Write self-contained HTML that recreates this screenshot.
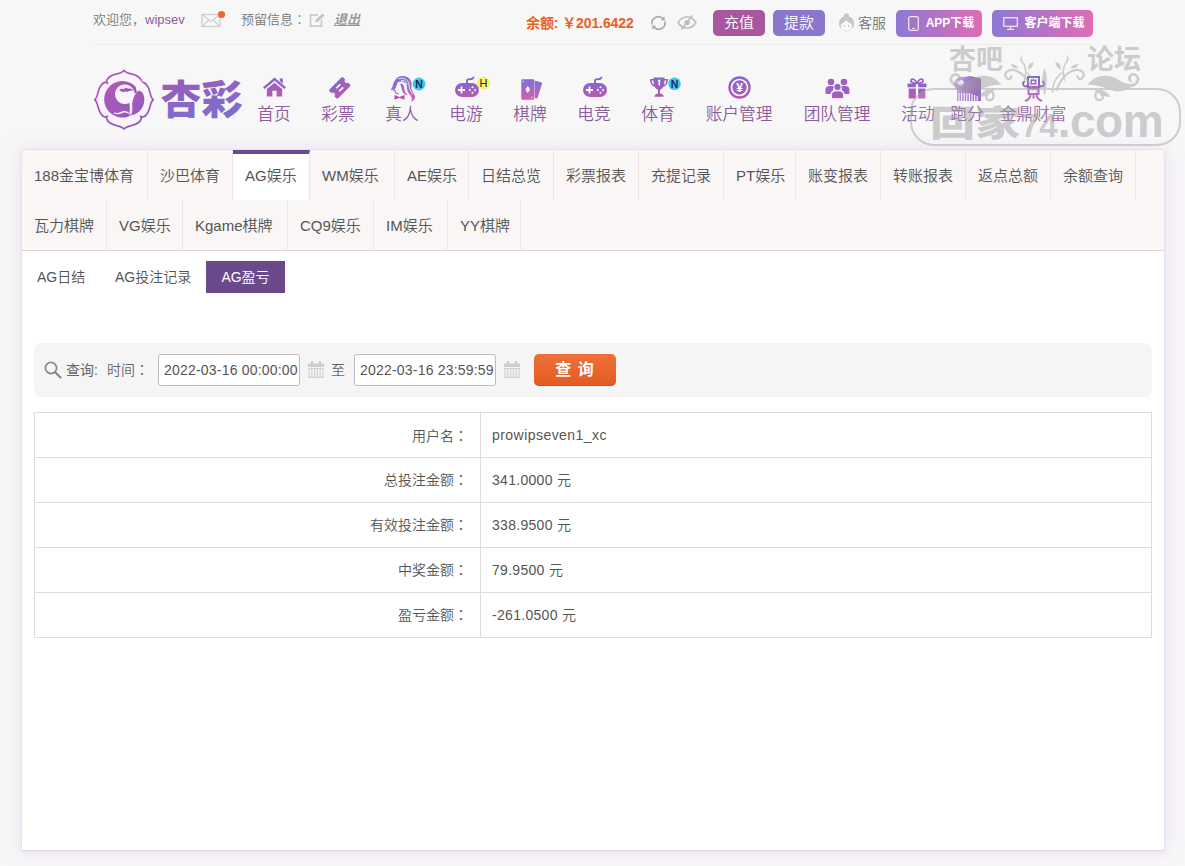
<!DOCTYPE html>
<html lang="zh-CN">
<head>
<meta charset="utf-8">
<title>AG盈亏</title>
<style>
*{box-sizing:border-box;margin:0;padding:0}
html,body{width:1185px;height:866px;overflow:hidden}
body{font-family:"Liberation Sans","Noto Sans CJK SC",sans-serif;background:#f8f7f8;color:#555;position:relative;font-size:13px;font-weight:350}
.abs{position:absolute}
.ic{position:absolute;overflow:visible}
#topbar{position:absolute;left:92px;top:0;width:1001px;height:45px;border-bottom:1px solid #ededed}
#topbar span,#topbar a{position:absolute;white-space:nowrap;line-height:20px;top:10px}
.btn{position:absolute;top:10px;height:26px;border-radius:5px;color:#fff;text-align:center;line-height:26px;font-size:14px}
#nav .item{position:absolute;top:72px;text-align:center;color:#8a5a9e;font-size:16.7px;white-space:nowrap}
#nav .item .lbl{position:absolute;top:32.500px;left:50%;transform:translateX(-50%);line-height:20px;color:#8b5c9c}
#panel{position:absolute;left:21px;top:149px;width:1144px;height:702px;background:#fff;border:1px solid #e9dff0;border-bottom-color:#dddbe1;box-shadow:0 0 20px rgba(205,165,228,.27),0 2px 4px rgba(90,80,100,.06);border-radius:3px}
#tabs{position:absolute;left:0;top:0;width:1142px;height:101px;background:#f9f6f5;border-bottom:1px solid #d6d6d6}
.tab{position:absolute;height:50px;line-height:52px;font-size:15px;color:#555;padding-left:12px;border-right:1px solid #ebe6e8;white-space:nowrap}
.tab.on{background:#fff;border-top:4px solid #6a4a8c;line-height:44px}
.sub{position:absolute;top:111px;height:32px;line-height:32px;font-size:14px;color:#555;white-space:nowrap}
.sub.on{background:#6b4a8b;color:#fff;text-align:center}
#search{position:absolute;left:12px;top:193px;width:1118px;height:54px;background:#f5f5f5;border-radius:8px}
#search span{position:absolute;white-space:nowrap;font-size:14px;line-height:20px;top:17px;color:#666}
.inp{position:absolute;top:11px;height:32px;border:1px solid #bdbdbd;border-radius:3px;background:#fff;font-size:14px;line-height:30px;padding-left:5px;letter-spacing:.2px;color:#555;white-space:nowrap}
table{position:absolute;left:12px;top:262px;width:1118px;border-collapse:collapse;font-size:14px;color:#555}
td{border:1px solid #ddd;height:45px;padding:0 11px}
.jc{font-family:"Liberation Sans","Noto Sans CJK JP",sans-serif;position:static!important}
td i{font-style:normal;position:relative}
td i.u{top:-1px;letter-spacing:.3px}
tr+tr td.l i{top:-1px}
td.l{width:446px;text-align:right;padding-right:12px}
</style>
</head>
<body>
<svg width="0" height="0" style="position:absolute"><defs>
<linearGradient id="g" x1="0" y1="0" x2="0" y2="1"><stop offset="0" stop-color="#8468cc"/><stop offset="1" stop-color="#bb58ae"/></linearGradient>
<linearGradient id="g2" x1="0" y1="0" x2="0" y2="1"><stop offset="0" stop-color="#7a70da"/><stop offset="1" stop-color="#d060b0"/></linearGradient>
<linearGradient id="g3" x1="0" y1="0" x2="1" y2="0.300"><stop offset="0" stop-color="#d9c8ee"/><stop offset=".45" stop-color="#a982d0"/><stop offset="1" stop-color="#8d56b4"/></linearGradient>
<linearGradient id="gl" x1="0" y1="0" x2="0.300" y2="1"><stop offset="0" stop-color="#a655ae"/><stop offset="1" stop-color="#7a70d4"/></linearGradient>
<linearGradient id="ge" x1="0" y1="0" x2="1" y2="1"><stop offset="0" stop-color="#b457b4"/><stop offset="1" stop-color="#8a5cc0"/></linearGradient>
</defs></svg>
<div id="topbar">
  <span style="left:1px;color:#777">欢迎您，<b style="font-weight:normal;color:#8b5c9c">wipsev</b></span>

  <svg class="ic" style="left:109px;top:12px" width="26" height="16" viewBox="0 0 26 16"><rect x="1" y="2.500" width="18" height="12" fill="none" stroke="#cfcfcf" stroke-width="1.300"/><path d="M1 2.500l9 7 9-7M1 14.500l6.500-6M19 14.500l-6.500-6" fill="none" stroke="#cfcfcf" stroke-width="1.200"/><circle cx="20.500" cy="2.500" r="3.600" fill="#f2622a"/></svg>
  <svg class="ic" style="left:217px;top:13px" width="16" height="14" viewBox="0 0 16 14"><path d="M9 2H1.500v11H12.500V7" fill="none" stroke="#c4c4c4" stroke-width="1.400"/><path d="M6 9.500l1-3 6.500-6 2 2-6.500 6z" fill="#c4c4c4"/></svg>
  <svg class="ic" style="left:558px;top:15px" width="17" height="16" viewBox="0 0 17 16"><path d="M2.200 9.500A6.200 6.200 0 0 1 13 4M14.800 6.500A6.200 6.200 0 0 1 4 12" fill="none" stroke="#aaa" stroke-width="1.700"/><path d="M11 5.500l4-0.300-0.800-4zM6 10.500l-4 0.300 0.800 4z" fill="#aaa"/></svg>
  <svg class="ic" style="left:585px;top:15px" width="20" height="15" viewBox="0 0 20 15"><path d="M1 7.500C3.500 3.500 6.500 2 10 2s6.500 1.500 9 5.500c-2.500 4-5.500 5.500-9 5.500S3.500 11.500 1 7.500z" fill="none" stroke="#bdbdbd" stroke-width="1.500"/><circle cx="10" cy="7.500" r="2.600" fill="#bdbdbd"/><path d="M15.500 0.500L4.500 14.500" stroke="#bdbdbd" stroke-width="1.600"/></svg>
  <svg class="ic" style="left:746px;top:13px" width="17" height="19" viewBox="0 0 17 19"><circle cx="8.500" cy="2.800" r="2.600" fill="#c6c6c6"/><path d="M8.500 3C13 3 16 6 16 10.500c0 2-0.500 3.500-1.500 4.500H2.500C1.500 14 1 12.500 1 10.500 1 6 4 3 8.500 3z" fill="#c6c6c6"/><ellipse cx="8.500" cy="12.500" rx="5.700" ry="5.500" fill="#fbfbfb" stroke="#d4d4d4" stroke-width="0.700"/><path d="M2.600 11C5 10.500 7 9 8 7c1.500 2 4 3.500 6.500 4C14 7 12 5 8.500 5S3 7 2.600 11z" fill="#c6c6c6"/><circle cx="6.200" cy="13" r="0.800" fill="#aaa"/><circle cx="10.800" cy="13" r="0.800" fill="#aaa"/></svg>
  <span style="left:149px;color:#777">预留信息<span class="jc" lang="ja">：</span></span>
  <a style="left:242px;color:#999;font-style:italic;text-decoration:underline;font-weight:bold">退出</a>
  <span style="left:434px;color:#e8601e;font-weight:bold;top:13px;font-size:14px;letter-spacing:-.1px">余额: ￥201.6422</span>
  <div class="btn" style="left:621px;width:52px;background:#a8569f;font-size:15px">充值</div>
  <div class="btn" style="left:681px;width:52px;background:#8a76cc;font-size:15px">提款</div>
  <span style="left:766px;color:#747474;font-size:14px;top:13px">客服</span>
  <div class="btn" style="left:804px;width:86px;height:27px;line-height:27px;background:linear-gradient(90deg,#8c79d4,#e06cb4);font-size:12px;padding-left:22px;font-weight:bold"><svg class="ic" style="left:12px;top:6px" width="11" height="15" viewBox="0 0 11 15"><rect x="0.700" y="0.700" width="9.600" height="13.600" rx="1.500" fill="none" stroke="#f3dff0" stroke-width="1.300"/><path d="M4 12.300h3" stroke="#f3dff0" stroke-width="1"/></svg>APP下载</div>
  <div class="btn" style="left:900px;width:101px;height:27px;line-height:27px;background:linear-gradient(90deg,#8c79d4,#e06cb4);font-size:12px;padding-left:24px;font-weight:bold"><svg class="ic" style="left:11px;top:7px" width="15" height="13" viewBox="0 0 15 13"><rect x="0.700" y="0.700" width="13.600" height="8.600" fill="none" stroke="#f3dff0" stroke-width="1.300"/><path d="M4 12.300h7M7.500 9.500v3" stroke="#f3dff0" stroke-width="1.300"/></svg>客户端下载</div>
</div>


<svg class="ic" style="left:93px;top:68px" width="160" height="64" viewBox="0 0 160 64">
  <g transform="translate(31 31.700)">
    <path fill="#faf3fc" stroke="url(#ge)" stroke-width="1.700" stroke-linejoin="round" d="M0.0 -29.3C-1.2 -27.6 -3.5 -26.8 -7.3 -25.9C-11.5 -24.9 -16.0 -23.0 -17.3 -19.2C-17.6 -18.0 -17.2 -17.0 -16.4 -16.4C-17.0 -17.2 -18.0 -17.6 -19.2 -17.3C-23.0 -16.0 -24.9 -11.5 -25.9 -7.3C-26.8 -3.5 -27.6 -1.2 -29.3 0.0C-27.6 1.2 -26.8 3.5 -25.9 7.3C-24.9 11.5 -23.0 16.0 -19.2 17.3C-18.0 17.6 -17.0 17.2 -16.4 16.4C-17.2 17.0 -17.6 18.0 -17.3 19.2C-16.0 23.0 -11.5 24.9 -7.3 25.9C-3.5 26.8 -1.2 27.6 0.0 29.3C1.2 27.6 3.5 26.8 7.3 25.9C11.5 24.9 16.0 23.0 17.3 19.2C17.6 18.0 17.2 17.0 16.4 16.4C17.0 17.2 18.0 17.6 19.2 17.3C23.0 16.0 24.9 11.5 25.9 7.3C26.8 3.5 27.6 1.2 29.3 0.0C27.6 -1.2 26.8 -3.5 25.9 -7.3C24.9 -11.5 23.0 -16.0 19.2 -17.3C18.0 -17.6 17.0 -17.2 16.4 -16.4C17.2 -17.0 17.6 -18.0 17.3 -19.2C16.0 -23.0 11.5 -24.9 7.3 -25.9C3.5 -26.8 1.2 -27.6 0.0 -29.3Z"/>
    <path fill="url(#ge)" fill-rule="evenodd" d="M-1.600 -18.600a18.200 18.200 0 1 0 0.010 0zM0.800 -15.300a9.800 9.800 0 1 1 -0.010 0z"/>
    <path fill="#faf3fc" d="M6.500 -20.500L11.800 -13 12.500 -8.500 20 -5 24 -11 14 -22Z"/>
    <path fill="#faf3fc" d="M4.500 -2.500L10.500 -4 9 5 8.300 13.500 5.500 15.500 5.800 6Z"/>
    <path fill="#faf3fc" d="M-1.500 -1.200h8v2.400h-8z"/>
    <path fill="#faf3fc" d="M10 -6l9 -4 4 8 -1 12 -8 7 -6 -2z"/>
    <path fill="url(#ge)" d="M14.200 -8.800C18 -9.200 20.300 -5 20.300 -1 20.500 6 17 11.800 11 14.500 9.500 15.100 8.200 15.200 7.300 14.800 9.200 11 8 7 8.200 4 8.500 0 10 -5 13.700 -8.300z"/>
    <path fill="url(#ge)" d="M-4.800 -9.500c1-1.500 3-1.800 4.200-1 1.200-1.500 3.800-1.700 5-0.500 1.800-0.300 3.800 0.300 5.200 1.800-2.500-0.300-4.500 0.300-6 1.400-1.500-0.800-3.500-0.600-4.500 0.400-1.300-0.800-2.700-1.300-3.900-2.100z"/>
    <path fill="#faf3fc" d="M-10 12.500c3 1.500 5.500 0.300 8-0.700 2.500-1 5-0.300 7 1.200l-0.500 1.200c-2-1.300-4-1.700-6-0.900-2.800 1.100-5.500 2-8.500 0.600z"/>
  </g>
  <text x="67.500" y="46" font-size="40" font-weight="900" fill="url(#gl)" font-family="Noto Sans CJK SC,sans-serif" textLength="82" lengthAdjust="spacingAndGlyphs">杏彩</text>
</svg>
<div id="nav">
  <div class="item" style="left:274px"><svg class="ic" style="left:-11.5px;top:5px" width="23" height="20" viewBox="0 0 24 20"><path fill="url(#g)" d="M12 0L24 10.2 22.3 12.2 12 3.6 1.7 12.2 0 10.2ZM17.5 1.2h3.2v5.3l-3.2-2.7ZM4 12.2L12 5.6 20 12.2V20H14.2V14H9.8V20H4Z"/></svg><div class="lbl">首页</div></div>
  <div class="item" style="left:338px"><svg class="ic" style="left:-8.800px;top:5.200px" width="21.500" height="21.500" viewBox="0 0 23 23"><g transform="rotate(-45 11.500 11.500)"><path fill="url(#g)" d="M2.500 5h18a1.400 1.400 0 0 1 1.400 1.400v3a2.200 2.200 0 0 0 0 4.400v3a1.400 1.400 0 0 1-1.400 1.400h-18a1.400 1.400 0 0 1-1.400-1.400v-3a2.200 2.200 0 0 0 0-4.400v-3a1.400 1.400 0 0 1 1.400-1.400z"/><rect x="8.500" y="8.300" width="6" height="1.900" fill="#faf8fb"/><rect x="8.500" y="12.800" width="6" height="1.900" fill="#faf8fb"/></g></svg><div class="lbl">彩票</div></div>
  <div class="item" style="left:402px"><svg class="ic" style="left:-12px;top:3px" width="36" height="28" viewBox="0 0 36 28"><path fill="url(#g2)" d="M6 4C8 1 13 0 17 2c4 2 5 6 4.500 10-0.500 3 1.500 5 3 8 1.500 3-0.500 6-3.500 6.500 1.500-2 1-4-0.500-6-2-2.500-3.500-4.500-3.500-7.500 0-3-1-5-3.500-6-2.500-1-5-0.500-6.500 1.500s-1.500 3.500-2 5.500l-3 1c-1 0.500-1.500-0.500-0.500-1.500C3 11 3 7 6 4z"/><path fill="url(#g2)" d="M10 9c2-0.700 4 1 4.200 4 0.200 3 1.500 5 3.800 7.500-2.800-0.300-5.500-2.300-6-5.500-0.300-2-0.700-4-2-6z"/><path fill="none" stroke="#f8f5fa" stroke-width="0.900" d="M8.500 3.800c5-1.800 10 0.700 10.500 6.200 0.300 4 2 6.500 3.500 9.500M11 5.500c3-0.500 5.500 1.500 6 4.500"/><path fill="none" stroke="url(#g2)" stroke-width="1.100" d="M7 8.500c-1 1.500-1.200 3-2 4.500l-1.500 2.200 1.600 0.600c0 1.500 0.500 3 2.500 3l1.500-0.200"/><path fill="#b54aa8" d="M4.500 20l5 2 5-2v4.700l-5-2-5 2z"/><circle cx="29" cy="9" r="6.400" fill="#3ec6f2"/><text x="29" y="12.800" font-size="10.500" font-weight="bold" text-anchor="middle" fill="#1c2a5c" font-family="Liberation Sans,sans-serif">N</text></svg><div class="lbl">真人</div></div>
  <div class="item" style="left:466px"><svg class="ic" style="left:-11px;top:3px" width="36" height="24" viewBox="0 0 36 24"><path fill="none" stroke="#7c6ac2" stroke-width="1.900" stroke-linecap="round" d="M12 8.500V6c0-1.500 1.300-2 2.500-1.800 1.500 0.300 2.800 0 4-1.700"/><rect x="0" y="8" width="24" height="14" rx="7" fill="url(#g)"/><path fill="#fff" d="M5.600 11.500h1.800v2.600h2.600v1.800H7.400v2.600H5.600v-2.600H3v-1.800h2.600z"/><circle cx="17.500" cy="12.300" r="1.050" fill="#fff"/><circle cx="17.500" cy="17.700" r="1.050" fill="#fff"/><circle cx="14.800" cy="15" r="1.050" fill="#fff"/><circle cx="20.200" cy="15" r="1.050" fill="#fff"/><circle cx="28.600" cy="8" r="6.500" fill="#f6f26a"/><text x="28.600" y="11.900" font-size="11" text-anchor="middle" fill="#222" font-family="Liberation Sans,sans-serif">H</text></svg><div class="lbl">电游</div></div>
  <div class="item" style="left:530px"><svg class="ic" style="left:-9px;top:7px" width="22" height="21" viewBox="0 0 22 21"><path fill="url(#g2)" d="M13.500 1.500l7 2a0.800 0.800 0 0 1 0.500 1l-4.500 15-3-0.500z"/><rect x="0.300" y="0.300" width="12.800" height="20.400" rx="0.800" fill="url(#g2)"/><path fill="#fff" d="M6.700 6.800l2.300 3.700-2.300 3.700-2.300-3.700z"/><circle cx="2.300" cy="2.500" r="0.700" fill="#e8dcf8"/><circle cx="11" cy="18.500" r="0.700" fill="#f8dcf0"/></svg><div class="lbl">棋牌</div></div>
  <div class="item" style="left:594px"><svg class="ic" style="left:-11px;top:3px" width="36" height="24" viewBox="0 0 36 24"><path fill="none" stroke="#7c6ac2" stroke-width="1.900" stroke-linecap="round" d="M12 8.500V6c0-1.500 1.300-2 2.500-1.800 1.500 0.300 2.800 0 4-1.700"/><rect x="0" y="8" width="24" height="14" rx="7" fill="url(#g)"/><path fill="#fff" d="M5.600 11.500h1.800v2.600h2.600v1.800H7.400v2.600H5.600v-2.600H3v-1.800h2.600z"/><circle cx="17.500" cy="12.300" r="1.050" fill="#fff"/><circle cx="17.500" cy="17.700" r="1.050" fill="#fff"/><circle cx="14.800" cy="15" r="1.050" fill="#fff"/><circle cx="20.200" cy="15" r="1.050" fill="#fff"/></svg><div class="lbl">电竞</div></div>
  <div class="item" style="left:658px"><svg class="ic" style="left:-9px;top:5px" width="34" height="22" viewBox="0 0 34 22"><path fill="url(#g)" d="M4.500 0.500h11v1.500h3.500c0 4.500-1.800 7-4.800 7.800C13.500 11.500 12 12.500 11 13v3.500c1.500 0.300 3 1 3.500 2.200v1H5.500v-1c0.500-1.200 2-1.900 3.500-2.200V13c-1-0.500-2.500-1.500-3.200-3.200C2.800 9 1 6.500 1 2h3.500zM4.500 3.500H2.600c0.200 2.300 1 3.800 2.400 4.600-0.300-1.400-0.500-3-0.500-4.600zM15.500 3.500c0 1.600-0.200 3.200-0.500 4.600 1.400-0.800 2.200-2.300 2.400-4.600z"/><path fill="#fff" d="M9.300 3.500l1.300-0.500h0.500v6h-1.500v-4.300l-0.800 0.300z" transform="translate(0 -0.500)"/><circle cx="25.500" cy="6.800" r="6.300" fill="#3ec6f2"/><text x="25.500" y="10.500" font-size="10.500" font-weight="bold" text-anchor="middle" fill="#1c2a5c" font-family="Liberation Sans,sans-serif">N</text></svg><div class="lbl">体育</div></div>
  <div class="item" style="left:739px"><svg class="ic" style="left:-11.500px;top:4px" width="23" height="23" viewBox="0 0 23 23"><circle cx="11.500" cy="11.500" r="11.200" fill="url(#g)"/><circle cx="11.500" cy="11.500" r="8" fill="none" stroke="#fff" stroke-width="1.600"/><text x="11.500" y="16" font-size="12" font-weight="bold" text-anchor="middle" fill="#fff" font-family="Liberation Sans,sans-serif">¥</text></svg><div class="lbl">账户管理</div></div>
  <div class="item" style="left:837px"><svg class="ic" style="left:-12.500px;top:6px" width="25" height="21" viewBox="0 0 25 21"><circle cx="6" cy="4" r="3.300" fill="url(#g)"/><circle cx="19" cy="4" r="3.300" fill="url(#g)"/><path fill="url(#g)" d="M0.500 14.500V11.500C0.500 9 2.500 8 5 8h2c1 0 1.800 0.200 2.500 0.600-1.200 1-1.500 2.300-1.300 3.600C6.500 13 5.500 14.500 5.500 16H2c-1 0-1.500-0.500-1.500-1.500zM24.500 14.500V11.500C24.500 9 22.500 8 20 8h-2c-1 0-1.800 0.200-2.500 0.600 1.200 1 1.500 2.300 1.300 3.600 1.700 0.800 2.700 2.300 2.700 3.800H23c1 0 1.500-0.500 1.500-1.500z"/><circle cx="12.500" cy="9" r="3.600" fill="url(#g)" stroke="#faf8fb" stroke-width="0.800"/><path fill="url(#g)" stroke="#faf8fb" stroke-width="0.800" d="M6.500 19V17c0-2.800 2.200-4 4.500-4h3c2.300 0 4.500 1.200 4.500 4v2c0 1-0.700 1.600-1.600 1.600H8.100C7.200 20.600 6.500 20 6.500 19z"/></svg><div class="lbl">团队管理</div></div>
  <div class="item" style="left:918px"><svg class="ic" style="left:-11px;top:6px" width="20" height="21" viewBox="0 0 20 21"><path fill="none" stroke="url(#g)" stroke-width="1.700" d="M10 5.500C8.500 1.500 5.500 0.300 4.200 1.800 3 3.300 5 5.500 10 5.500zM10 5.500C11.500 1.500 14.500 0.300 15.800 1.800 17 3.300 15 5.500 10 5.500z"/><path fill="url(#g)" d="M0.500 5.500h8.300v3.700H0.500zM11.200 5.500h8.300v3.700h-8.300zM1.700 10.400h7.100V20.500H1.700zM11.200 10.400h7.100V20.500h-7.100z"/></svg><div class="lbl">活动</div></div>
  <div class="item" style="left:967px"><svg class="ic" style="left:-15px;top:3px" width="30" height="27" viewBox="0 0 30 27"><path fill="url(#g3)" d="M2 9C2 4 7 1 12 2l6-1 11 2.500V26H5V15C3 14 2 11.500 2 9z"/><path fill="#f6f2f8" opacity=".85" d="M6 5.500c2-1.500 4.500-1 5.500 1s-0.500 4.500-3 4.500C6 11 4.500 7.500 6 5.500z"/><path stroke="#f3eef6" stroke-width="1.200" d="M7 18v9M9.600 18v9M12.200 18v9M14.800 18v9M17.400 18v9M20 19v8M22.600 20v7M25.200 21v6"/></svg><div class="lbl">跑分</div></div>
  <div class="item" style="left:1033px"><svg class="ic" style="left:-12.500px;top:3px" width="25" height="27" viewBox="0 0 25 27"><path fill="none" stroke="url(#g)" stroke-width="2" d="M7 2h11v10H7zM4 6.500c-2.200 0-2.800 3.200-0.800 4.500 1.500 1 3.300 0 3.800-1.200M21 6.500c2.200 0 2.800 3.200 0.800 4.500-1.500 1-3.300 0-3.800-1.200M7.500 13.500h10v5.500h-10zM9.500 19c0 3.500-2 5.800-5.500 7M15.500 19c0 3.500 2 5.800 5.500 7M12.500 19v4.500"/><path fill="url(#g)" d="M9.500 4.500h6v5h-6z"/><path fill="#faf8fb" d="M11 6h3v2h-3z"/></svg><div class="lbl">金鼎财富</div></div>
</div>


<div id="wm" style="position:absolute;left:0;top:0;width:1185px;height:150px;opacity:.5;pointer-events:none;overflow:hidden">
  <div style="position:absolute;left:910px;top:88px;width:271px;height:58px;border:2.500px solid #a6a6a6;border-radius:24px;background:rgba(255,255,255,.25)"></div>
  <div style="position:absolute;left:949px;top:40px;font-size:27px;line-height:40px;font-weight:bold;color:#a3a3a3;white-space:nowrap">杏吧</div>
  <div style="position:absolute;left:1087px;top:40px;font-size:27px;line-height:40px;font-weight:bold;color:#a3a3a3;white-space:nowrap">论坛</div>
  <svg class="ic" style="left:0;top:0" width="1185" height="150" viewBox="0 0 1185 150"><g fill="#a3a3a3"><path d="M 1087.5 85.0 C 1094.5 75.0 1108.5 73.0 1118.5 80.0 C 1124.5 84.0 1130.5 85.0 1134.5 83.0 C 1129.5 91.0 1118.5 93.0 1110.5 90.0 C 1102.5 87.0 1094.5 84.0 1087.5 85.0 Z"/><path d="M 1001.5 85.0 C 994.5 75.0 980.5 73.0 970.5 80.0 C 964.5 84.0 958.5 85.0 954.5 83.0 C 959.5 91.0 970.5 93.0 978.5 90.0 C 986.5 87.0 994.5 84.0 1001.5 85.0 Z"/><path d="M 1094.5 90.0 C 1100.5 88.0 1107.5 91.0 1110.5 97.0 C 1103.5 97.0 1098.5 94.0 1094.5 90.0 Z"/><path d="M 994.5 90.0 C 988.5 88.0 981.5 91.0 978.5 97.0 C 985.5 97.0 990.5 94.0 994.5 90.0 Z"/><path d="M 1065.5 64.0 C 1066.5 60.0 1067.5 58.0 1067.0 55.0 C 1069.5 58.0 1069.0 62.0 1065.5 64.0 Z"/><path d="M 1023.5 64.0 C 1022.5 60.0 1021.5 58.0 1022.0 55.0 C 1019.5 58.0 1020.0 62.0 1023.5 64.0 Z"/><path d="M 1060.5 70.0 C 1057.5 68.0 1055.5 66.0 1055.5 62.0 C 1059.5 63.0 1061.5 66.0 1060.5 70.0 Z"/><path d="M 1028.5 70.0 C 1031.5 68.0 1033.5 66.0 1033.5 62.0 C 1029.5 63.0 1027.5 66.0 1028.5 70.0 Z"/><path d="M 1070.5 68.0 C 1072.5 65.0 1075.5 64.0 1078.5 64.0 C 1077.5 67.0 1074.5 69.0 1070.5 68.0 Z"/><path d="M 1018.5 68.0 C 1016.5 65.0 1013.5 64.0 1010.5 64.0 C 1011.5 67.0 1014.5 69.0 1018.5 68.0 Z"/><path d="M 1044.5 68.0 C 1047.5 75.0 1047.5 86.0 1044.5 96.0 C 1041.5 86.0 1041.5 75.0 1044.5 68.0 Z"/></g><g fill="none" stroke="#a3a3a3" stroke-linecap="round"><path stroke-width="2.6" d="M 1129.5 86.0 C 1137.5 86.0 1140.5 78.0 1135.5 75.0 C 1131.5 73.0 1127.5 77.0 1130.5 81.0"/><path stroke-width="2.6" d="M 959.5 86.0 C 951.5 86.0 948.5 78.0 953.5 75.0 C 957.5 73.0 961.5 77.0 958.5 81.0"/><path stroke-width="2.2" d="M 1097.5 91.0 C 1093.5 95.0 1095.5 101.0 1100.5 100.0 C 1103.5 99.0 1103.5 96.0 1101.5 95.0"/><path stroke-width="2.2" d="M 991.5 91.0 C 995.5 95.0 993.5 101.0 988.5 100.0 C 985.5 99.0 985.5 96.0 987.5 95.0"/><path stroke-width="2.2" d="M 1056.5 90.0 C 1060.5 80.0 1065.5 72.0 1075.5 70.0 C 1082.5 69.0 1085.5 74.0 1082.5 78.0 C 1080.5 80.0 1077.5 79.0 1077.5 76.0"/><path stroke-width="2.2" d="M 1032.5 90.0 C 1028.5 80.0 1023.5 72.0 1013.5 70.0 C 1006.5 69.0 1003.5 74.0 1006.5 78.0 C 1008.5 80.0 1011.5 79.0 1011.5 76.0"/><path stroke-width="1.6" d="M 1064.5 80.0 C 1062.5 74.0 1062.5 69.0 1065.5 63.0"/><path stroke-width="1.6" d="M 1024.5 80.0 C 1026.5 74.0 1026.5 69.0 1023.5 63.0"/><path stroke-width="1.6" d="M 1052.5 92.0 C 1052.5 84.0 1056.5 77.0 1061.5 73.0"/><path stroke-width="1.6" d="M 1036.5 92.0 C 1036.5 84.0 1032.5 77.0 1027.5 73.0"/></g></svg>
  <div style="position:absolute;left:930px;top:95px;height:52px;line-height:52px;white-space:nowrap;color:#a3a3a3;font-weight:900"><span style="display:inline-block;font-size:45px;font-weight:900;transform:scaleY(.78);transform-origin:50% 72%">回家</span><span style="font-size:33px;font-weight:bold;margin-left:1px">74</span><span style="font-size:46px;font-weight:bold;letter-spacing:-.5px">.com</span></div>
</div>
<div id="panel">
  <div id="tabs">
    <div class="tab" style="left:0;top:0;width:126px">188金宝博体育</div>
    <div class="tab" style="left:126px;top:0;width:85px">沙巴体育</div>
    <div class="tab on" style="left:211px;top:0;width:77px">AG娱乐</div>
    <div class="tab" style="left:288px;top:0;width:85px">WM娱乐</div>
    <div class="tab" style="left:373px;top:0;width:74px">AE娱乐</div>
    <div class="tab" style="left:447px;top:0;width:85px">日结总览</div>
    <div class="tab" style="left:532px;top:0;width:85px">彩票报表</div>
    <div class="tab" style="left:617px;top:0;width:85px">充提记录</div>
    <div class="tab" style="left:702px;top:0;width:72px">PT娱乐</div>
    <div class="tab" style="left:774px;top:0;width:85px">账变报表</div>
    <div class="tab" style="left:859px;top:0;width:85px">转账报表</div>
    <div class="tab" style="left:944px;top:0;width:85px">返点总额</div>
    <div class="tab" style="left:1029px;top:0;width:85px">余额查询</div>
    <div class="tab" style="left:0;top:50px;width:85px">瓦力棋牌</div>
    <div class="tab" style="left:85px;top:50px;width:76px">VG娱乐</div>
    <div class="tab" style="left:161px;top:50px;width:105px">Kgame棋牌</div>
    <div class="tab" style="left:266px;top:50px;width:86px">CQ9娱乐</div>
    <div class="tab" style="left:352px;top:50px;width:74px">IM娱乐</div>
    <div class="tab" style="left:426px;top:50px;width:73px">YY棋牌</div>
  </div>
  <div class="sub" style="left:15px">AG日结</div>
  <div class="sub" style="left:93px">AG投注记录</div>
  <div class="sub on" style="left:184px;width:79px">AG盈亏</div>

  <div id="search">
    <svg class="ic" style="left:10px;top:18px" width="18" height="18" viewBox="0 0 18 18"><circle cx="7" cy="7" r="5.600" fill="none" stroke="#888" stroke-width="1.700"/><path d="M11 11l5.500 5.500" stroke="#888" stroke-width="2.200" stroke-linecap="round"/></svg><svg class="ic" style="left:274px;top:18px" width="16" height="17" viewBox="0 0 16 17"><path fill="#cdcdcd" d="M0 2.500h16V6H0zM3 0h2v4H3zM11 0h2v4h-2z"/><path stroke="#d2d2d2" stroke-width="1.200" d="M1 7v9.500M3.800 7v9.500M6.600 7v9.500M9.400 7v9.500M12.200 7v9.500M15 7v9.500M0 16.400h16M0 7.500h16"/></svg><svg class="ic" style="left:470px;top:18px" width="16" height="17" viewBox="0 0 16 17"><path fill="#cdcdcd" d="M0 2.500h16V6H0zM3 0h2v4H3zM11 0h2v4h-2z"/><path stroke="#d2d2d2" stroke-width="1.200" d="M1 7v9.500M3.800 7v9.500M6.600 7v9.500M9.400 7v9.500M12.200 7v9.500M15 7v9.500M0 16.400h16M0 7.500h16"/></svg><span style="left:32px;font-weight:400;color:#666">查询:</span>
    <span style="left:73px">时间<span class="jc" lang="ja">：</span></span>
    <div class="inp" style="left:124px;width:142px">2022-03-16 00:00:00</div>
    <span style="left:297px">至</span>
    <div class="inp" style="left:320px;width:142px">2022-03-16 23:59:59</div>
    <div style="position:absolute;left:500px;top:11px;width:82px;height:32px;border-radius:5px;background:linear-gradient(#ee6f38,#e35c22);color:#fff;font-size:16px;font-weight:bold;line-height:32px;text-align:center;letter-spacing:1px;box-shadow:inset 0 -1px 0 rgba(160,60,10,.35)">查 询</div>
  </div>

  <table>
    <tr><td class="l"><i>用户名<span class="jc" lang="ja">：</span></i></td><td><i style="letter-spacing:.45px">prowipseven1_xc</i></td></tr>
    <tr><td class="l"><i>总投注金额<span class="jc" lang="ja">：</span></i></td><td><i class="u">341.0000 元</i></td></tr>
    <tr><td class="l"><i>有效投注金额<span class="jc" lang="ja">：</span></i></td><td><i class="u">338.9500 元</i></td></tr>
    <tr><td class="l"><i>中奖金额<span class="jc" lang="ja">：</span></i></td><td><i class="u">79.9500 元</i></td></tr>
    <tr><td class="l"><i>盈亏金额<span class="jc" lang="ja">：</span></i></td><td><i class="u">-261.0500 元</i></td></tr>
  </table>
</div>
</body>
</html>
